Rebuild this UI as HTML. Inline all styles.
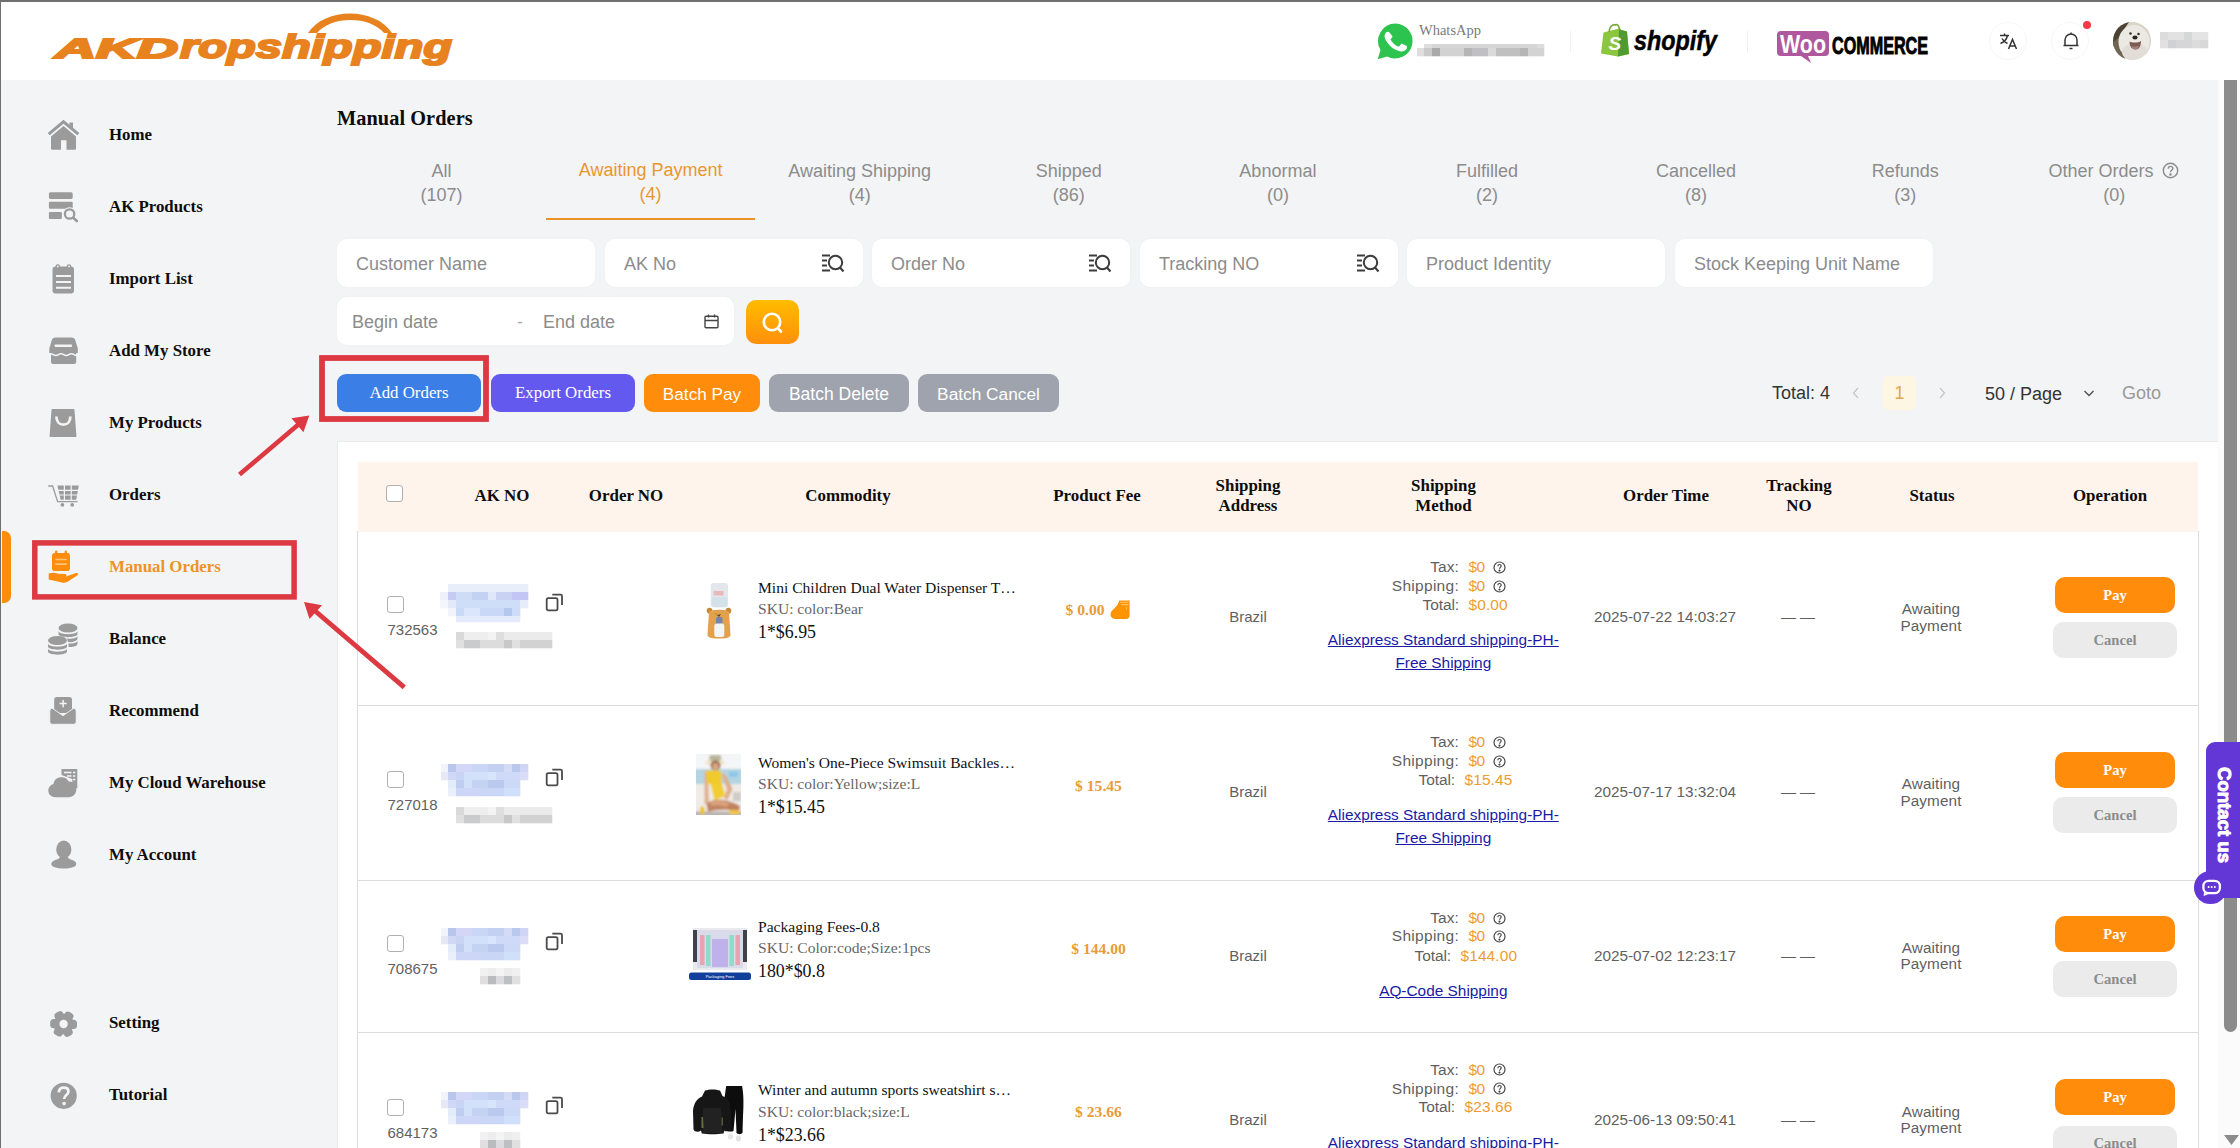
<!DOCTYPE html>
<html lang="en">
<head>
<meta charset="utf-8">
<title>Manual Orders - AKDropshipping</title>
<style>
html,body{margin:0;padding:0}
body{width:2240px;height:1148px;overflow:hidden;background:#f3f4f6;font-family:"Liberation Sans",sans-serif}
#page{position:relative;width:2240px;height:1148px;overflow:hidden;background:#f3f4f6}
.a{position:absolute;box-sizing:border-box}
.t{position:absolute;white-space:nowrap;margin:0}
svg{position:absolute;overflow:visible}
a{color:#1a1aa6;text-decoration:underline}

</style>
</head>
<body>
<div id="page">
<div class="a" style="left:0px;top:0px;width:2240px;height:80px;background:#fff"></div>
<div class="a" style="left:0px;top:0px;width:2240px;height:2px;background:#6f6f6f"></div>
<div class="a" style="left:2218px;top:80px;width:22px;height:1068px;background:#fbfbfb"></div>
<div class="a" style="left:2224px;top:80px;width:13px;height:952px;background:#8b8b8b;border-radius:0 0 7px 7px"></div>
<svg style="left:2223.500px;top:1135px" width="15" height="10" viewBox="0 0 15 10"><path d="M0 0h15L7.500 10z" fill="#8b8b8b"/></svg>
<div class="a" style="left:0px;top:0px;width:1.2px;height:1148px;background:#6f6f6f"></div>
<svg style="left:0;top:0" width="480" height="80" viewBox="0 0 480 80">
<path d="M308 33 C 325 7, 375 7, 392 33 L 384 33 C 370 15.500, 331 15.500, 317 33 Z" fill="#e8821e"/>
<g font-family="Liberation Sans, sans-serif" font-weight="bold" font-style="italic" fill="#e8821e" stroke="#e8821e" stroke-width="2" stroke-linejoin="miter">
<text x="55" y="57.500"><tspan font-size="28" textLength="123" lengthAdjust="spacingAndGlyphs">AKD</tspan><tspan x="180" font-size="34" textLength="272" lengthAdjust="spacingAndGlyphs">ropshipping</tspan></text>
</g>
</svg>
<svg style="left:1374.500px;top:20.500px" width="41" height="41" viewBox="0 0 40 40">
<path d="M20 2.5a17 17 0 0 0-14.6 25.7L2.6 37.2l9.3-2.6A17 17 0 1 0 20 2.5z" fill="#2dc34f"/>
<path d="M14.2 11.5c-.6-1.2-1.200-1.100-1.800-1.100-1.300 0-3.100 1.600-3.100 4.300 0 2.600 1.900 5.100 2.200 5.500.3.400 3.800 6 9.300 8.100 4.500 1.800 5.400 1.400 6.400 1.300 1-.1 3.100-1.300 3.600-2.500.4-1.200.4-2.300.3-2.500-.1-.2-.5-.4-1-.6l-3.600-1.700c-.5-.2-.9-.3-1.200.3-.4.500-1.400 1.700-1.700 2-.3.400-.6.400-1.100.1-.5-.2-2.200-.8-4.200-2.600-1.500-1.400-2.600-3.100-2.900-3.600-.3-.5 0-.8.200-1.100l.8-.9c.300-.3.300-.5.500-.9.200-.400.100-.700 0-.9z" fill="#fff"/>
</svg>
<div class="t " style="left:1419px;top:20.5px;font-size:14.5px;line-height:19px;color:#7a7a7a;font-family:'Liberation Serif',serif;">WhatsApp</div>
<svg style="left:1417px;top:44px" width="127" height="12" viewBox="0 0 127 12"><rect x="7" y="0" width="8.3" height="4.3" fill="#dedede"/><rect x="15" y="0" width="105.3" height="4.3" fill="#d6d6d6"/><rect x="120" y="0" width="7.3" height="4.3" fill="#dddddd"/><rect x="0" y="4" width="7.3" height="8.3" fill="#dfdddd"/><rect x="7" y="4" width="8.3" height="8.3" fill="#cacaca"/><rect x="15" y="4" width="8.3" height="8.3" fill="#a9a9a9"/><rect x="23" y="4" width="24.3" height="8.3" fill="#d2d2d2"/><rect x="47" y="4" width="8.3" height="8.3" fill="#b5b5b5"/><rect x="55" y="4" width="16.3" height="8.3" fill="#c0c0c4"/><rect x="71" y="4" width="8.3" height="8.3" fill="#dadada"/><rect x="79" y="4" width="24.3" height="8.3" fill="#c0c0c0"/><rect x="103" y="4" width="8.3" height="8.3" fill="#b5b5b5"/><rect x="111" y="4" width="16.3" height="8.3" fill="#d3d3d3"/></svg>
<div class="a" style="left:1570px;top:31px;width:1px;height:21px;background:#efefef"></div>
<svg style="left:1600px;top:22px" width="120" height="38" viewBox="0 0 120 38">
<path d="M3.5 10.500 L19 6.5 L21.5 8 L27 9.5 L29 32 L18 34.5 L1 31.500 Z" fill="#8cc63f"/>
<path d="M19 6.5 L21.5 8 L27 9.5 L29 32 L18 34.5 Z" fill="#4f9a32"/>
<path d="M9 10 C9 5 13 1.500 15.500 3 C18 1.500 19.500 5 19.500 8" fill="none" stroke="#7aa93c" stroke-width="1.600"/>
<text x="8.5" y="28" font-family="Liberation Sans, sans-serif" font-weight="bold" font-style="italic" font-size="19" fill="#fff">S</text>
<text x="34" y="28" font-family="Liberation Sans, sans-serif" font-weight="bold" font-style="italic" font-size="28.500" fill="#000" stroke="#000" stroke-width=".5" textLength="83" lengthAdjust="spacingAndGlyphs">shopify</text>
</svg>
<div class="a" style="left:1747px;top:31px;width:1px;height:21px;background:#efefef"></div>
<svg style="left:1776px;top:28px" width="156" height="38" viewBox="0 0 156 38">
<path d="M5 3h44a4 4 0 0 1 4 4v17a4 4 0 0 1-4 4H32l3 7-10-7H5a4 4 0 0 1-4-4V7a4 4 0 0 1 4-4z" fill="#b0589e"/>
<text x="4" y="25" font-family="Liberation Sans, sans-serif" font-weight="bold" font-size="25" fill="#fff" textLength="46" lengthAdjust="spacingAndGlyphs">Woo</text>
<text x="56" y="25.500" font-family="Liberation Sans, sans-serif" font-weight="bold" font-size="23" fill="#000" stroke="#000" stroke-width="0.9" textLength="96" lengthAdjust="spacingAndGlyphs">COMMERCE</text>
</svg>
<div class="a" style="left:1989px;top:22px;width:38px;height:38px;border-radius:50%;background:#fff;border:1px solid #f7f7f7"></div>
<svg style="left:1998px;top:31px" width="20" height="20" viewBox="0 0 20 20" fill="none" stroke="#333" stroke-width="1.500">
<path d="M2 4.500h9M6.500 2.500v2M9.500 4.500c-.8 3.500-3.500 6.500-7 8M4 7.500c1.200 2.300 3 4 5.500 5"/>
<path d="M10.500 18l4-9.500 4 9.500M11.800 15h5.400"/>
</svg>
<div class="a" style="left:2051px;top:22px;width:38px;height:38px;border-radius:50%;background:#fff;border:1px solid #f7f7f7"></div>
<svg style="left:2061px;top:31px" width="20" height="20" viewBox="0 0 20 20" fill="none" stroke="#333" stroke-width="1.500">
<path d="M4 14.500V9a6 6 0 0 1 12 0v5.500M2.500 14.500h15M8.500 17.500h3M10 1.500v1.500"/>
</svg>
<div class="a" style="left:2083px;top:21px;width:8px;height:8px;border-radius:50%;background:#f5384a"></div>
<svg style="left:2113px;top:22px" width="38" height="38" viewBox="0 0 38 38"><defs><clipPath id="av"><circle cx="19" cy="19" r="19"/></clipPath></defs>
<g clip-path="url(#av)"><rect width="38" height="38" fill="#d9d3c8"/><path d="M0 0h16l-8 12-8 14z" fill="#4b4234"/><path d="M0 20l8-6 4 24H0z" fill="#6f6553"/><path d="M30 0h8v14z" fill="#8a8476"/>
<ellipse cx="21" cy="20" rx="15.500" ry="17" fill="#ece9e3"/><ellipse cx="22" cy="30" rx="13" ry="9" fill="#e2ded7"/>
<circle cx="17.500" cy="11.500" r="1.300" fill="#3a332c"/><circle cx="25.500" cy="12" r="1.300" fill="#3a332c"/><ellipse cx="22" cy="15.500" rx="2.600" ry="1.900" fill="#2a2522"/>
<path d="M16.500 19.500c2 1.500 9 1.500 11.500-.5 0 5-2 8.500-5.500 8.500s-6-3-6-8z" fill="#7d5a56"/><path d="M18.500 24c1.500 1 6 1 7.500-.5-.5 2.500-2 4-3.800 4s-3.200-1.200-3.700-3.500z" fill="#a5807c"/></g></svg>
<svg style="left:2160px;top:32px" width="48" height="16" viewBox="0 0 48 16"><rect x="0" y="0" width="8.3" height="8.3" fill="#dcdcdc"/><rect x="8" y="0" width="16.3" height="8.3" fill="#e2e2e2"/><rect x="24" y="0" width="8.3" height="8.3" fill="#d6d8d8"/><rect x="32" y="0" width="16.3" height="8.3" fill="#e4e4e4"/><rect x="0" y="8" width="8.3" height="8.3" fill="#e2e0e0"/><rect x="8" y="8" width="8.3" height="8.3" fill="#cfd1d3"/><rect x="16" y="8" width="16.3" height="8.3" fill="#d6d6d8"/><rect x="32" y="8" width="8.3" height="8.3" fill="#dcdcdc"/><rect x="40" y="8" width="8.3" height="8.3" fill="#d8d8d8"/></svg>
<svg style="left:47px;top:119px" width="33" height="32" viewBox="0 0 33 32"><path d="M16.500 .8 L.7 14 L2.700 16.300 L16.500 4.800 L30.300 16.300 L32.300 14 L26 8.700 V3.500 H22.500 V5.800 Z" fill="#9b9b9b"/><path d="M16.500 7 L4 17.400 V29.800 a1 1 0 0 0 1 1 H14 V21.200 H19.500 V30.800 H28 a1 1 0 0 0 1-1 V17.400 Z" fill="#9b9b9b"/></svg>
<div class="t " style="left:109px;top:124px;font-size:16.85px;line-height:22px;color:#0d0d0d;font-family:'Liberation Serif',serif;font-weight:bold;">Home</div>
<svg style="left:48px;top:191px" width="32" height="32" viewBox="0 0 32 32"><rect x=".9" y="1.300" width="23.800" height="6.600" rx="1.600" fill="#9b9b9b"/><rect x=".9" y="10.800" width="23.800" height="7" rx="1" fill="#9b9b9b"/><rect x=".9" y="21" width="13" height="7" rx="1" fill="#9b9b9b"/><circle cx="21.600" cy="23" r="6.800" fill="#f3f4f6"/><circle cx="21.600" cy="23" r="4.700" fill="#f3f4f6" stroke="#9b9b9b" stroke-width="2.300"/><path d="M25.300 26.800 L28.800 30" stroke="#9b9b9b" stroke-width="2.600" stroke-linecap="round"/></svg>
<div class="t " style="left:109px;top:196px;font-size:16.85px;line-height:22px;color:#0d0d0d;font-family:'Liberation Serif',serif;font-weight:bold;">AK Products</div>
<svg style="left:51px;top:263px" width="26" height="32" viewBox="0 0 26 32"><rect x="1.500" y="3.500" width="21.500" height="27" rx="3" fill="#9b9b9b"/><circle cx="6.800" cy="3.600" r="2.300" fill="#9b9b9b"/><circle cx="18" cy="3.600" r="2.300" fill="#9b9b9b"/><circle cx="6.800" cy="3.400" r=".9" fill="#f3f4f6"/><circle cx="18" cy="3.400" r=".9" fill="#f3f4f6"/><path d="M5 13h15M5 19h15M5 24.800h15" stroke="#f3f4f6" stroke-width="2.100"/></svg>
<div class="t " style="left:109px;top:268px;font-size:16.85px;line-height:22px;color:#0d0d0d;font-family:'Liberation Serif',serif;font-weight:bold;">Import List</div>
<svg style="left:48px;top:336px" width="32" height="30" viewBox="0 0 32 30"><path d="M7.500 1.600h16a4 4 0 0 1 3.900 3l2.400 8v5.400H1.300v-5.400l2.400-8a4 4 0 0 1 3.800-3z" fill="#9b9b9b"/><rect x="3" y="17" width="25.200" height="11" rx="2" fill="#9b9b9b"/><path d="M0 18.600 q2.600-1.800 5.200 0 t5.200 0 t5.200 0 t5.200 0 t5.200 0 t5.200 0" fill="none" stroke="#f3f4f6" stroke-width="1.500"/><path d="M0 17h3v3h-3zM28.200 17h3v3h-3z" fill="#f3f4f6"/><rect x="6.400" y="8.600" width="17.800" height="2.300" rx="1.100" fill="#f3f4f6"/></svg>
<div class="t " style="left:109px;top:340px;font-size:16.85px;line-height:22px;color:#0d0d0d;font-family:'Liberation Serif',serif;font-weight:bold;">Add My Store</div>
<svg style="left:49px;top:407px" width="30" height="32" viewBox="0 0 30 32"><path d="M3.300 2.800h21.400l2 26.500H1.300z" fill="#9b9b9b" stroke="#9b9b9b" stroke-width="1.500" stroke-linejoin="round"/><path d="M7.400 9.500c0 5 2.800 8.200 7 8.200s7-3.200 7-8.200" fill="none" stroke="#f3f4f6" stroke-width="2.700"/></svg>
<div class="t " style="left:109px;top:412px;font-size:16.85px;line-height:22px;color:#0d0d0d;font-family:'Liberation Serif',serif;font-weight:bold;">My Products</div>
<svg style="left:47px;top:483px" width="34" height="28" viewBox="0 0 34 28"><path d="M1.300 3h4.300l5 15.700h20" fill="none" stroke="#9b9b9b" stroke-width="1.300"/><path d="M10.400 2.500h21.400l-2.600 14.300h-15.600z" fill="#9b9b9b"/><path d="M10 7.400h22M11 12h21M17.400 2v15M24.200 2v15" stroke="#f3f4f6" stroke-width="1.200"/><circle cx="15.400" cy="21.800" r="1.900" fill="#9b9b9b"/><circle cx="25.200" cy="21.800" r="1.900" fill="#9b9b9b"/></svg>
<div class="t " style="left:109px;top:484px;font-size:16.85px;line-height:22px;color:#0d0d0d;font-family:'Liberation Serif',serif;font-weight:bold;">Orders</div>
<svg style="left:48px;top:549px" width="32" height="36" viewBox="0 0 32 36"><rect x="4" y="4" width="18" height="18" rx="2.800" fill="#ff8c0a"/><rect x="7" y="1.500" width="2.400" height="5" rx="1.200" fill="#ff8c0a"/><rect x="16.600" y="1.500" width="2.400" height="5" rx="1.200" fill="#ff8c0a"/><path d="M7.300 10.500h11.400M7.300 15.200h11.400" stroke="#ffc27a" stroke-width="1.700"/><path d="M.7 24.500c3.500-1.200 6.500-1 9.500.2l7 .4c1.800.2 1.900 2.200.2 2.400l-4 .3 4.500-.3 10.300-3.400c1.800-.5 2.600 1.100 1.300 2.200l-9.500 6.200c-2 1.200-4 1.500-6 1.100l-13.300-3z" fill="#ff8c0a"/></svg>
<div class="t " style="left:109px;top:556px;font-size:16.85px;line-height:22px;color:#ee9226;font-family:'Liberation Serif',serif;font-weight:bold;">Manual Orders</div>
<svg style="left:47px;top:622px" width="32" height="34" viewBox="0 0 32 34"><g fill="#9b9b9b"><ellipse cx="21" cy="6" rx="9.500" ry="4.500"/><path d="M11.500 9.500c2 3.500 17 3.500 19 0v3c-2 3.500-17 3.500-19 0z"/><path d="M20 16.500c3.500.8 9.500 0 10.500-2.500v3c-1 2.500-5.500 3.500-9.500 3z"/><path d="M21.500 21.500c3.500.3 8-.500 9-2.500v3c-1 2.500-5 3.200-9 3z"/><ellipse cx="10.500" cy="18.500" rx="9.500" ry="4.500"/><path d="M1 22c2 3.500 17 3.500 19 0v3c-2 3.500-17 3.500-19 0z"/><path d="M1 27c2 3.500 17 3.500 19 0v3c-2 3.500-17 3.500-19 0z"/></g></svg>
<div class="t " style="left:109px;top:628px;font-size:16.85px;line-height:22px;color:#0d0d0d;font-family:'Liberation Serif',serif;font-weight:bold;">Balance</div>
<svg style="left:48px;top:695px" width="30" height="32" viewBox="0 0 30 32"><rect x="6.200" y="2" width="17.800" height="16" rx="2.800" fill="#9b9b9b"/><path d="M15.100 5v7.200M11.500 8.600h7.200" stroke="#f3f4f6" stroke-width="1.500"/><path d="M1.800 16.500c0-1.500.8-2.800 2.200-3.500l11 7.700 11-7.700c1.400.7 2.200 2 2.200 3.500v10.300a2.500 2.500 0 0 1-2.500 2.500h-21.400a2.500 2.500 0 0 1-2.500-2.500z" fill="#9b9b9b" stroke="#f3f4f6" stroke-width=".9"/></svg>
<div class="t " style="left:109px;top:700px;font-size:16.85px;line-height:22px;color:#0d0d0d;font-family:'Liberation Serif',serif;font-weight:bold;">Recommend</div>
<svg style="left:47px;top:767px" width="32" height="32" viewBox="0 0 32 32"><path d="M14.500 2h15.800v19h-5v-9l-10.800-4z" fill="#9b9b9b"/><path d="M17 5.500h7.500M26 5.500h2.300M20 9h4.500M26 9h2.300M26 12.500h2.300" stroke="#f3f4f6" stroke-width="1.500"/><path d="M8 30.300a6.800 6.800 0 0 1-1.600-13.400A8.300 8.300 0 0 1 21.800 14.500a6.600 6.600 0 0 1 7.600 7c0 4.800-2.800 8.800-7.800 8.800z" fill="#9b9b9b"/></svg>
<div class="t " style="left:109px;top:772px;font-size:16.85px;line-height:22px;color:#0d0d0d;font-family:'Liberation Serif',serif;font-weight:bold;">My Cloud Warehouse</div>
<svg style="left:50px;top:839px" width="28" height="32" viewBox="0 0 28 32"><ellipse cx="13.800" cy="10.500" rx="7.600" ry="9" fill="#9b9b9b"/><path d="M9.800 17.500c.3 2-3 3-5.500 4-2 .8-3 2-3 3.500 0 2.800 5.300 4.500 12.500 4.500s12.500-1.700 12.500-4.500c0-1.500-1-2.700-3-3.500-2.500-1-5.800-2-5.500-4z" fill="#9b9b9b"/></svg>
<div class="t " style="left:109px;top:844px;font-size:16.85px;line-height:22px;color:#0d0d0d;font-family:'Liberation Serif',serif;font-weight:bold;">My Account</div>
<svg style="left:49px;top:1009px" width="30" height="30" viewBox="0 0 30 30"><g transform="translate(14.600 15)" fill="#9b9b9b"><circle r="10.200"/><rect x="-4.300" y="-13.400" width="9.400" height="9" rx="3.600" transform="rotate(30)"/><rect x="-4.300" y="-13.400" width="9.400" height="9" rx="3.600" transform="rotate(90)"/><rect x="-4.300" y="-13.400" width="9.400" height="9" rx="3.600" transform="rotate(150)"/><rect x="-4.300" y="-13.400" width="9.400" height="9" rx="3.600" transform="rotate(210)"/><rect x="-4.300" y="-13.400" width="9.400" height="9" rx="3.600" transform="rotate(270)"/><rect x="-4.300" y="-13.400" width="9.400" height="9" rx="3.600" transform="rotate(330)"/><circle r="4.200" fill="#f3f4f6"/></g></svg>
<div class="t " style="left:109px;top:1012px;font-size:16.85px;line-height:22px;color:#0d0d0d;font-family:'Liberation Serif',serif;font-weight:bold;">Setting</div>
<svg style="left:49px;top:1081px" width="30" height="30" viewBox="0 0 30 30"><circle cx="14.700" cy="14.800" r="13.100" fill="#9b9b9b"/><path d="M9.800 11.300c.2-3 2.200-4.700 5-4.700 2.900 0 4.700 1.700 4.700 4 0 3.200-4.400 3.600-4.400 7.300" fill="none" stroke="#f3f4f6" stroke-width="2.700"/><circle cx="15.100" cy="22.600" r="1.800" fill="#f3f4f6"/></svg>
<div class="t " style="left:109px;top:1084px;font-size:16.85px;line-height:22px;color:#0d0d0d;font-family:'Liberation Serif',serif;font-weight:bold;">Tutorial</div>
<div class="a" style="left:2px;top:531px;width:9px;height:72px;background:#ff8c0a;border-radius:0 7px 7px 0"></div>
<div class="t " style="left:337px;top:105px;font-size:20.3px;line-height:26px;color:#0d0d0d;font-family:'Liberation Serif',serif;font-weight:bold;letter-spacing:.08px;">Manual Orders</div>
<div class="t " style="left:441.5px;transform:translateX(-50%);top:159.5px;font-size:18px;line-height:23px;color:#8c8c8c;">All</div>
<div class="t " style="left:441.5px;transform:translateX(-50%);top:183.5px;font-size:18px;line-height:23px;color:#8c8c8c;">(107)</div>
<div class="t " style="left:650.6px;transform:translateX(-50%);top:158.5px;font-size:18px;line-height:23px;color:#ea972e;">Awaiting Payment</div>
<div class="t " style="left:650.6px;transform:translateX(-50%);top:182.5px;font-size:18px;line-height:23px;color:#ea972e;">(4)</div>
<div class="t " style="left:859.7px;transform:translateX(-50%);top:159.5px;font-size:18px;line-height:23px;color:#8c8c8c;">Awaiting Shipping</div>
<div class="t " style="left:859.7px;transform:translateX(-50%);top:183.5px;font-size:18px;line-height:23px;color:#8c8c8c;">(4)</div>
<div class="t " style="left:1068.8px;transform:translateX(-50%);top:159.5px;font-size:18px;line-height:23px;color:#8c8c8c;">Shipped</div>
<div class="t " style="left:1068.8px;transform:translateX(-50%);top:183.5px;font-size:18px;line-height:23px;color:#8c8c8c;">(86)</div>
<div class="t " style="left:1277.9px;transform:translateX(-50%);top:159.5px;font-size:18px;line-height:23px;color:#8c8c8c;">Abnormal</div>
<div class="t " style="left:1277.9px;transform:translateX(-50%);top:183.5px;font-size:18px;line-height:23px;color:#8c8c8c;">(0)</div>
<div class="t " style="left:1487.0px;transform:translateX(-50%);top:159.5px;font-size:18px;line-height:23px;color:#8c8c8c;">Fulfilled</div>
<div class="t " style="left:1487.0px;transform:translateX(-50%);top:183.5px;font-size:18px;line-height:23px;color:#8c8c8c;">(2)</div>
<div class="t " style="left:1696.1px;transform:translateX(-50%);top:159.5px;font-size:18px;line-height:23px;color:#8c8c8c;">Cancelled</div>
<div class="t " style="left:1696.1px;transform:translateX(-50%);top:183.5px;font-size:18px;line-height:23px;color:#8c8c8c;">(8)</div>
<div class="t " style="left:1905.2px;transform:translateX(-50%);top:159.5px;font-size:18px;line-height:23px;color:#8c8c8c;">Refunds</div>
<div class="t " style="left:1905.2px;transform:translateX(-50%);top:183.5px;font-size:18px;line-height:23px;color:#8c8c8c;">(3)</div>
<div class="t " style="left:2101px;transform:translateX(-50%);top:159.5px;font-size:18px;line-height:23px;color:#8c8c8c;">Other Orders</div>
<svg style="left:2162px;top:162px" width="17" height="17" viewBox="0 0 17 17" fill="none" stroke="#8c8c8c" stroke-width="1.400"><circle cx="8.500" cy="8.500" r="7.200"/><path d="M6.200 6.800c0-1.500 1-2.400 2.300-2.400 1.400 0 2.300.9 2.300 2.100 0 1.700-2.300 1.800-2.300 3.700"/><circle cx="8.500" cy="12.500" r=".6" fill="#8c8c8c"/></svg>
<div class="t " style="left:2114.3px;transform:translateX(-50%);top:183.5px;font-size:18px;line-height:23px;color:#8c8c8c;">(0)</div>
<div class="a" style="left:546px;top:217.6px;width:209px;height:2px;background:#ea9228"></div>
<div class="a" style="left:337px;top:239px;width:258px;height:48px;background:#fff;border-radius:10px;box-shadow:0 0 3px rgba(0,0,0,.03)"></div>
<div class="t " style="left:356px;top:252.5px;font-size:18px;line-height:23px;color:#8c8c8c;">Customer Name</div>
<div class="a" style="left:605px;top:239px;width:258px;height:48px;background:#fff;border-radius:10px;box-shadow:0 0 3px rgba(0,0,0,.03)"></div>
<div class="t " style="left:624px;top:252.5px;font-size:18px;line-height:23px;color:#8c8c8c;">AK No</div>
<svg style="left:821px;top:253px" width="24" height="22" viewBox="0 0 24 22" fill="none" stroke="#3c3c3c" stroke-width="2"><path d="M1 2.500h8M1 7.500h5M1 12.500h5M1 17.500h8"/><circle cx="14.500" cy="9.500" r="6.700"/><path d="M19 14.500l3.500 4"/></svg>
<div class="a" style="left:872px;top:239px;width:258px;height:48px;background:#fff;border-radius:10px;box-shadow:0 0 3px rgba(0,0,0,.03)"></div>
<div class="t " style="left:891px;top:252.5px;font-size:18px;line-height:23px;color:#8c8c8c;">Order No</div>
<svg style="left:1088px;top:253px" width="24" height="22" viewBox="0 0 24 22" fill="none" stroke="#3c3c3c" stroke-width="2"><path d="M1 2.500h8M1 7.500h5M1 12.500h5M1 17.500h8"/><circle cx="14.500" cy="9.500" r="6.700"/><path d="M19 14.500l3.500 4"/></svg>
<div class="a" style="left:1140px;top:239px;width:258px;height:48px;background:#fff;border-radius:10px;box-shadow:0 0 3px rgba(0,0,0,.03)"></div>
<div class="t " style="left:1159px;top:252.5px;font-size:18px;line-height:23px;color:#8c8c8c;">Tracking NO</div>
<svg style="left:1356px;top:253px" width="24" height="22" viewBox="0 0 24 22" fill="none" stroke="#3c3c3c" stroke-width="2"><path d="M1 2.500h8M1 7.500h5M1 12.500h5M1 17.500h8"/><circle cx="14.500" cy="9.500" r="6.700"/><path d="M19 14.500l3.500 4"/></svg>
<div class="a" style="left:1407px;top:239px;width:258px;height:48px;background:#fff;border-radius:10px;box-shadow:0 0 3px rgba(0,0,0,.03)"></div>
<div class="t " style="left:1426px;top:252.5px;font-size:18px;line-height:23px;color:#8c8c8c;">Product Identity</div>
<div class="a" style="left:1675px;top:239px;width:258px;height:48px;background:#fff;border-radius:10px;box-shadow:0 0 3px rgba(0,0,0,.03)"></div>
<div class="t " style="left:1694px;top:252.5px;font-size:18px;line-height:23px;color:#8c8c8c;">Stock Keeping Unit Name</div>
<div class="a" style="left:337px;top:297px;width:397px;height:48px;background:#fff;border-radius:10px;box-shadow:0 0 3px rgba(0,0,0,.03)"></div>
<div class="t " style="left:352px;top:310.5px;font-size:18px;line-height:23px;color:#8c8c8c;">Begin date</div>
<div class="t " style="left:517px;top:310.5px;font-size:18px;line-height:23px;color:#aaa;">-</div>
<div class="t " style="left:543px;top:310.5px;font-size:18px;line-height:23px;color:#8c8c8c;">End date</div>
<svg style="left:704px;top:314px" width="15" height="15" viewBox="0 0 15 15" fill="none" stroke="#444" stroke-width="1.400"><rect x="1" y="2.200" width="13" height="11.500" rx="1"/><path d="M1 6.500h13M4.500 .5v3M10.500 .5v3"/></svg>
<div class="a" style="left:746px;top:300px;width:53px;height:44px;border-radius:10px;background:linear-gradient(180deg,#ffbc00,#ff8f0a)"></div>
<svg style="left:760px;top:310px" width="26" height="26" viewBox="0 0 26 26" fill="none" stroke="#fff" stroke-width="2.600"><circle cx="12" cy="12" r="8.200"/><path d="M18 18.500l3 3" stroke-linecap="round"/></svg>
<div class="a" style="left:337px;top:374px;width:144px;height:38px;background:#3b7fe6;border-radius:9px"></div>
<div class="t " style="left:409.0px;transform:translateX(-50%);top:382px;font-size:16.85px;line-height:22px;color:#fff;font-family:'Liberation Serif',serif;">Add Orders</div>
<div class="a" style="left:491px;top:374px;width:144px;height:38px;background:#6359ee;border-radius:9px"></div>
<div class="t " style="left:563.0px;transform:translateX(-50%);top:382px;font-size:16.85px;line-height:22px;color:#fff;font-family:'Liberation Serif',serif;">Export Orders</div>
<div class="a" style="left:644px;top:374px;width:116px;height:38px;background:#ff8c0a;border-radius:9px"></div>
<div class="t " style="left:702.0px;transform:translateX(-50%);top:383px;font-size:17.2px;line-height:22px;color:#fff;">Batch Pay</div>
<div class="a" style="left:769px;top:374px;width:140px;height:38px;background:#9ea3ad;border-radius:9px"></div>
<div class="t " style="left:839.0px;transform:translateX(-50%);top:382.5px;font-size:17.5px;line-height:23px;color:#fff;">Batch Delete</div>
<div class="a" style="left:918px;top:374px;width:141px;height:38px;background:#9ea3ad;border-radius:9px"></div>
<div class="t " style="left:988.5px;transform:translateX(-50%);top:383px;font-size:17.3px;line-height:22px;color:#fff;">Batch Cancel</div>
<div class="t " style="left:1772px;top:381.5px;font-size:18px;line-height:23px;color:#333;">Total: 4</div>
<svg style="left:1851px;top:387px" width="10" height="12" viewBox="0 0 10 12" fill="none" stroke="#c8c8c8" stroke-width="1.400"><path d="M7 1L2.500 6 7 11"/></svg>
<div class="a" style="left:1883px;top:376px;width:33px;height:34px;background:#fdf6e3;border-radius:5px"></div>
<div class="t " style="left:1899.5px;transform:translateX(-50%);top:381.5px;font-size:18px;line-height:23px;color:#dca94a;">1</div>
<svg style="left:1937px;top:387px" width="10" height="12" viewBox="0 0 10 12" fill="none" stroke="#c8c8c8" stroke-width="1.400"><path d="M3 1l4.500 5L3 11"/></svg>
<div class="t " style="left:1985px;top:382.5px;font-size:18px;line-height:23px;color:#333;">50 / Page</div>
<svg style="left:2083px;top:389px" width="12" height="9" viewBox="0 0 12 9" fill="none" stroke="#555" stroke-width="1.500"><path d="M1.500 2l4.500 4.500L10.500 2"/></svg>
<div class="t " style="left:2122px;top:381.5px;font-size:18px;line-height:23px;color:#999;">Goto</div>
<div class="a" style="left:337px;top:441px;width:1881px;height:720px;background:#fff;border-top:1px solid #e8eaeb;border-left:1px solid #e8eaeb"></div>
<div class="a" style="left:358px;top:462px;width:1840px;height:69.5px;background:#fef4eb"></div>
<div class="a" style="left:357px;top:531px;width:1842px;height:640px;border-left:1px solid #dcdcdc;border-right:1px solid #dcdcdc"></div>
<div class="a" style="left:386px;top:485px;width:17px;height:17px;background:#fff;border:1px solid #b0b0b0;border-radius:3px"></div>
<div class="t " style="left:502px;transform:translateX(-50%);top:485px;font-size:16.9px;line-height:22px;color:#0d0d0d;font-family:'Liberation Serif',serif;font-weight:bold;">AK NO</div>
<div class="t " style="left:626px;transform:translateX(-50%);top:485px;font-size:16.9px;line-height:22px;color:#0d0d0d;font-family:'Liberation Serif',serif;font-weight:bold;">Order NO</div>
<div class="t " style="left:848px;transform:translateX(-50%);top:485px;font-size:16.9px;line-height:22px;color:#0d0d0d;font-family:'Liberation Serif',serif;font-weight:bold;">Commodity</div>
<div class="t " style="left:1097px;transform:translateX(-50%);top:485px;font-size:16.9px;line-height:22px;color:#0d0d0d;font-family:'Liberation Serif',serif;font-weight:bold;">Product Fee</div>
<div class="t " style="left:1248px;transform:translateX(-50%);top:475px;font-size:16.9px;line-height:22px;color:#0d0d0d;font-family:'Liberation Serif',serif;font-weight:bold;">Shipping</div>
<div class="t " style="left:1248px;transform:translateX(-50%);top:495px;font-size:16.9px;line-height:22px;color:#0d0d0d;font-family:'Liberation Serif',serif;font-weight:bold;">Address</div>
<div class="t " style="left:1443.5px;transform:translateX(-50%);top:475px;font-size:16.9px;line-height:22px;color:#0d0d0d;font-family:'Liberation Serif',serif;font-weight:bold;">Shipping</div>
<div class="t " style="left:1443.5px;transform:translateX(-50%);top:495px;font-size:16.9px;line-height:22px;color:#0d0d0d;font-family:'Liberation Serif',serif;font-weight:bold;">Method</div>
<div class="t " style="left:1666px;transform:translateX(-50%);top:485px;font-size:16.9px;line-height:22px;color:#0d0d0d;font-family:'Liberation Serif',serif;font-weight:bold;">Order Time</div>
<div class="t " style="left:1799px;transform:translateX(-50%);top:475px;font-size:16.9px;line-height:22px;color:#0d0d0d;font-family:'Liberation Serif',serif;font-weight:bold;">Tracking</div>
<div class="t " style="left:1799px;transform:translateX(-50%);top:495px;font-size:16.9px;line-height:22px;color:#0d0d0d;font-family:'Liberation Serif',serif;font-weight:bold;">NO</div>
<div class="t " style="left:1932px;transform:translateX(-50%);top:485px;font-size:16.9px;line-height:22px;color:#0d0d0d;font-family:'Liberation Serif',serif;font-weight:bold;">Status</div>
<div class="t " style="left:2110px;transform:translateX(-50%);top:485px;font-size:16.9px;line-height:22px;color:#0d0d0d;font-family:'Liberation Serif',serif;font-weight:bold;">Operation</div>
<svg style="left:0;top:0" width="0" height="0"><defs><filter id="bl" x="-10%" y="-10%" width="120%" height="120%"><feGaussianBlur stdDeviation="0.55"/></filter><filter id="bl2" x="-10%" y="-10%" width="120%" height="120%"><feGaussianBlur stdDeviation="0.9"/></filter></defs></svg>
<div class="a" style="left:387px;top:596px;width:17px;height:17px;background:#fff;border:1px solid #b0b0b0;border-radius:3px"></div>
<div class="t " style="left:387.5px;top:620px;font-size:15px;line-height:20px;color:#5f5f5f;">732563</div>
<svg style="left:440px;top:584px" width="88" height="38" viewBox="0 0 88 38"><rect x="8" y="0" width="80.3" height="8.3" fill="#e8eefa"/><rect x="0" y="8" width="8.3" height="8.3" fill="#eef1f9"/><rect x="8" y="8" width="8.3" height="8.3" fill="#c5cbf3"/><rect x="16" y="8" width="16.3" height="8.3" fill="#cfdcf5"/><rect x="32" y="8" width="16.3" height="8.3" fill="#c3d2f2"/><rect x="48" y="8" width="8.3" height="8.3" fill="#dfe8fa"/><rect x="56" y="8" width="16.3" height="8.3" fill="#c9d2f3"/><rect x="72" y="8" width="16.3" height="8.3" fill="#c3c6f5"/><rect x="0" y="16" width="8.3" height="8.3" fill="#f4f6fc"/><rect x="8" y="16" width="8.3" height="8.3" fill="#e3e9f8"/><rect x="16" y="16" width="64.3" height="8.3" fill="#cfdef8"/><rect x="80" y="16" width="8.3" height="8.3" fill="#e6ecf9"/><rect x="8" y="24" width="8.3" height="8.3" fill="#f1f4fb"/><rect x="16" y="24" width="8.3" height="8.3" fill="#c9daf6"/><rect x="24" y="24" width="16.3" height="8.3" fill="#dbe5fb"/><rect x="40" y="24" width="24.3" height="8.3" fill="#c9d8f7"/><rect x="64" y="24" width="8.3" height="8.3" fill="#b3c8ec"/><rect x="72" y="24" width="8.3" height="8.3" fill="#cddcf8"/><rect x="16" y="32" width="64.3" height="6.3" fill="#e3eafa"/></svg>
<svg style="left:456px;top:632px" width="96" height="16" viewBox="0 0 96 16"><rect x="0" y="0" width="8.3" height="8.3" fill="#d9d9d9"/><rect x="8" y="0" width="24.3" height="8.3" fill="#eeeeee"/><rect x="32" y="0" width="8.3" height="8.3" fill="#f3f3f3"/><rect x="40" y="0" width="8.3" height="8.3" fill="#dedede"/><rect x="48" y="0" width="48.3" height="8.3" fill="#ebebeb"/><rect x="0" y="8" width="8.3" height="8.3" fill="#e0e0e0"/><rect x="8" y="8" width="16.3" height="8.3" fill="#c9cbcd"/><rect x="24" y="8" width="24.3" height="8.3" fill="#dcdcdc"/><rect x="48" y="8" width="8.3" height="8.3" fill="#c8c8c8"/><rect x="56" y="8" width="8.3" height="8.3" fill="#e0e0e0"/><rect x="64" y="8" width="32.3" height="8.3" fill="#d2d2d2"/></svg>
<svg style="left:545px;top:593px" width="18" height="19" viewBox="0 0 18 19" fill="none" stroke="#4a4a4a" stroke-width="1.800"><rect x="1.700" y="5.200" width="10.800" height="12.200" rx="1.600"/><path d="M7.300 1.700h8.200a1.500 1.500 0 0 1 1.500 1.500V12"/></svg>
<svg style="left:702px;top:581px" width="34" height="60" viewBox="0 0 34 60"><g filter="url(#bl)"><rect x="8.700" y="2" width="17.400" height="24.500" rx="3" fill="#e3e7ec"/><rect x="9.500" y="16" width="15.800" height="10" rx="3" fill="#d3e1e9"/><rect x="11.500" y="10" width="10" height="4.500" fill="#e7b9bb"/><circle cx="7.600" cy="29.700" r="2.900" fill="#c98a35"/><circle cx="26.400" cy="29.700" r="2.900" fill="#c98a35"/><path d="M7 31 C10 28,24 28,27 31 L28.500 54 C28.500 57,22 57.500,17 57.500 C12 57.500,5.500 57,5.500 54 Z" fill="#e2a14e"/><path d="M12.500 31.500 l3 2.500 l3.500-1 l-2 3 z" fill="#5a4a2a"/><rect x="14" y="36" width="6.500" height="7" rx="1.500" fill="#7684ab"/><rect x="12.300" y="42.500" width="10" height="13.500" rx="2.500" fill="#f4f4f6"/></g></svg>
<div class="t " style="left:758px;top:578px;font-size:15.57px;line-height:20px;color:#111;font-family:'Liberation Serif',serif;">Mini Children Dual Water Dispenser T…</div>
<div class="t " style="left:758px;top:599px;font-size:15.57px;line-height:20px;color:#666;font-family:'Liberation Serif',serif;">SKU: color:Bear</div>
<div class="t " style="left:758px;top:620.5px;font-size:17.85px;line-height:23px;color:#111;font-family:'Liberation Serif',serif;">1*$6.95</div>
<div class="t " style="left:1085px;transform:translateX(-50%);top:600px;font-size:15.6px;line-height:20px;color:#e89c38;font-family:'Liberation Serif',serif;font-weight:bold;">$ 0.00</div>
<svg style="left:1109px;top:599px" width="22" height="21" viewBox="0 0 22 21"><path d="M10.200 1.500 H20.600 V16 C20.600 18.500 19.500 20 17 20 H7.500 C3.500 20 1 18 1.600 14.500 C2.300 10.500 8.500 9 10.200 1.500 Z" fill="#ff9400"/><path d="M11 3.300h8.600M12.500 5.600h7M17.500 8v2.500" stroke="#ffc46a" stroke-width="1.100" fill="none"/></svg>
<div class="t " style="left:1248px;transform:translateX(-50%);top:607px;font-size:15px;line-height:20px;color:#5f5f5f;">Brazil</div>
<div class="t " style="left:1459px;transform:translateX(-100%);top:556.8px;font-size:15.5px;line-height:20px;color:#5f5f5f;letter-spacing:.1px;">Tax:</div>
<div class="t " style="left:1468.5px;top:556.8px;font-size:15.5px;line-height:20px;color:#ee9c30;letter-spacing:-.5px;">$0</div>
<svg style="left:1492.5px;top:560.5px" width="13" height="13" viewBox="0 0 13 13" fill="none" stroke="#444" stroke-width="1.200"><circle cx="6.500" cy="6.500" r="5.500"/><path d="M4.800 5.300c0-1.100.8-1.800 1.700-1.800 1 0 1.700.7 1.700 1.600 0 1.200-1.700 1.400-1.700 2.700"/><circle cx="6.500" cy="9.600" r=".5" fill="#444"/></svg>
<div class="t " style="left:1459px;transform:translateX(-100%);top:575.8px;font-size:15.5px;line-height:20px;color:#5f5f5f;letter-spacing:.28px;">Shipping:</div>
<div class="t " style="left:1468.5px;top:575.8px;font-size:15.5px;line-height:20px;color:#ee9c30;letter-spacing:-.5px;">$0</div>
<svg style="left:1492.5px;top:579.5px" width="13" height="13" viewBox="0 0 13 13" fill="none" stroke="#444" stroke-width="1.200"><circle cx="6.500" cy="6.500" r="5.500"/><path d="M4.800 5.300c0-1.100.8-1.800 1.700-1.800 1 0 1.700.7 1.700 1.600 0 1.200-1.700 1.400-1.700 2.700"/><circle cx="6.500" cy="9.600" r=".5" fill="#444"/></svg>
<div class="t " style="left:1459px;transform:translateX(-100%);top:594.5px;font-size:15.5px;line-height:20px;color:#5f5f5f;letter-spacing:-.1px;">Total:</div>
<div class="t " style="left:1468.5px;top:594.5px;font-size:15.5px;line-height:20px;color:#ee9c30;letter-spacing:.08px;">$0.00</div>
<div class="t " style="left:1443.3px;transform:translateX(-50%);top:629.6px;font-size:15.4px;line-height:20px;color:#1a1aa6;"><a>Aliexpress Standard shipping-PH-</a></div>
<div class="t " style="left:1443.3px;transform:translateX(-50%);top:652.6px;font-size:15.4px;line-height:20px;color:#1a1aa6;"><a>Free Shipping</a></div>
<div class="t " style="left:1665px;transform:translateX(-50%);top:607px;font-size:15.3px;line-height:20px;color:#5f5f5f;">2025-07-22 14:03:27</div>
<div class="t " style="left:1798px;transform:translateX(-50%);top:607px;font-size:15px;line-height:20px;color:#5f5f5f;">— —</div>
<div class="t " style="left:1931px;transform:translateX(-50%);top:598.5px;font-size:15.3px;line-height:20px;color:#5f5f5f;letter-spacing:.1px;">Awaiting</div>
<div class="t " style="left:1931px;transform:translateX(-50%);top:615.5px;font-size:15.3px;line-height:20px;color:#5f5f5f;letter-spacing:.1px;">Payment</div>
<div class="a" style="left:2055px;top:577px;width:120px;height:36px;background:#ff8c0a;border-radius:10px"></div>
<div class="t " style="left:2115px;transform:translateX(-50%);top:585.5px;font-size:14.6px;line-height:19px;color:#fff;font-family:'Liberation Serif',serif;font-weight:bold;">Pay</div>
<div class="a" style="left:2053px;top:622px;width:124px;height:36px;background:#ebebeb;border-radius:10px"></div>
<div class="t " style="left:2115px;transform:translateX(-50%);top:630.5px;font-size:14.6px;line-height:19px;color:#8c8c8c;font-family:'Liberation Serif',serif;font-weight:bold;">Cancel</div>
<div class="a" style="left:358px;top:705px;width:1840px;height:1px;background:#dcdcdc"></div>
<div class="a" style="left:387px;top:771px;width:17px;height:17px;background:#fff;border:1px solid #b0b0b0;border-radius:3px"></div>
<div class="t " style="left:387.5px;top:795px;font-size:15px;line-height:20px;color:#5f5f5f;">727018</div>
<svg style="left:441px;top:764px" width="87" height="32" viewBox="0 0 87 32"><rect x="0" y="0" width="7.3" height="8.3" fill="#f3f4fa"/><rect x="7" y="0" width="8.3" height="8.3" fill="#b9c6ec"/><rect x="15" y="0" width="16.3" height="8.3" fill="#d3d6f6"/><rect x="31" y="0" width="16.3" height="8.3" fill="#c9d6f5"/><rect x="47" y="0" width="16.3" height="8.3" fill="#c3d0f2"/><rect x="63" y="0" width="8.3" height="8.3" fill="#d3dbf7"/><rect x="71" y="0" width="8.3" height="8.3" fill="#b9c9ee"/><rect x="79" y="0" width="8.3" height="8.3" fill="#d0d5f5"/><rect x="0" y="8" width="7.3" height="8.3" fill="#e6e8f5"/><rect x="7" y="8" width="8.3" height="8.3" fill="#d0d8f5"/><rect x="15" y="8" width="8.3" height="8.3" fill="#c9d3f3"/><rect x="23" y="8" width="24.3" height="8.3" fill="#d3e0fa"/><rect x="47" y="8" width="8.3" height="8.3" fill="#d9e5fc"/><rect x="55" y="8" width="24.3" height="8.3" fill="#cfdaf8"/><rect x="79" y="8" width="8.3" height="8.3" fill="#dadcf8"/><rect x="7" y="16" width="8.3" height="8.3" fill="#e3ecf9"/><rect x="15" y="16" width="8.3" height="8.3" fill="#bfcdf0"/><rect x="23" y="16" width="8.3" height="8.3" fill="#d3e0fa"/><rect x="31" y="16" width="16.3" height="8.3" fill="#c5d3f3"/><rect x="47" y="16" width="16.3" height="8.3" fill="#bcc9ee"/><rect x="63" y="16" width="16.3" height="8.3" fill="#ccdaf7"/><rect x="7" y="24" width="8.3" height="8.3" fill="#eaf0f9"/><rect x="15" y="24" width="24.3" height="8.3" fill="#cdd6f6"/><rect x="39" y="24" width="24.3" height="8.3" fill="#c9d6f5"/><rect x="63" y="24" width="16.3" height="8.3" fill="#d0dffa"/></svg>
<svg style="left:456px;top:807px" width="96" height="16" viewBox="0 0 96 16"><rect x="0" y="0" width="8.3" height="8.3" fill="#d9d9d9"/><rect x="8" y="0" width="24.3" height="8.3" fill="#eeeeee"/><rect x="32" y="0" width="8.3" height="8.3" fill="#f3f3f3"/><rect x="40" y="0" width="8.3" height="8.3" fill="#dedede"/><rect x="48" y="0" width="48.3" height="8.3" fill="#ebebeb"/><rect x="0" y="8" width="8.3" height="8.3" fill="#e0e0e0"/><rect x="8" y="8" width="16.3" height="8.3" fill="#c9cbcd"/><rect x="24" y="8" width="24.3" height="8.3" fill="#dcdcdc"/><rect x="48" y="8" width="8.3" height="8.3" fill="#c8c8c8"/><rect x="56" y="8" width="8.3" height="8.3" fill="#e0e0e0"/><rect x="64" y="8" width="32.3" height="8.3" fill="#d2d2d2"/></svg>
<svg style="left:545px;top:768px" width="18" height="19" viewBox="0 0 18 19" fill="none" stroke="#4a4a4a" stroke-width="1.800"><rect x="1.700" y="5.200" width="10.800" height="12.200" rx="1.600"/><path d="M7.300 1.700h8.200a1.500 1.500 0 0 1 1.500 1.500V12"/></svg>
<svg style="left:696px;top:754px" width="45" height="61" viewBox="0 0 45 61"><defs><clipPath id="swc"><rect width="45" height="61"/></clipPath></defs><g clip-path="url(#swc)"><g filter="url(#bl2)"><rect x="-2" y="-2" width="49" height="18" fill="#f4f5f6"/><rect x="-2" y="15" width="49" height="15.500" fill="#b3d5e1"/><rect x="33" y="17.500" width="9" height="5.500" fill="#8fc6ea"/><rect x="-2" y="30" width="49" height="33" fill="#efebe7"/><rect x="37" y="38" width="8" height="9" fill="#cfcbc7"/><rect x="-2" y="57.500" width="49" height="5" fill="#b9b4b2"/><ellipse cx="19" cy="8.500" rx="10" ry="3" fill="#efe5c6"/><rect x="13.200" y="1" width="12" height="6" rx="2" fill="#b9b59b"/><ellipse cx="19.500" cy="11.500" rx="5" ry="5" fill="#9a6a48"/><ellipse cx="19.500" cy="12.500" rx="3" ry="3.500" fill="#dba883"/><path d="M8.500 17 l3.500 0 l1 33 l-4.500 0z" fill="#e0b090"/><path d="M25 19 l5 2 l6.500 14 l-5 11 l-3.500-2 l3-9z" fill="#deae8c"/><path d="M10 16.500 h15 l1 13.500 h-15z" fill="#f0c92a"/><path d="M14.500 30 h11.500 l3.500 12 l-11 4.500z" fill="#f1cd33"/><path d="M10.500 50 C 16 44, 30 44, 44 52 L 43 57.500 C 32 55, 20 55, 12 58 Z" fill="#c08360"/><path d="M14 48 C 20 45, 28 46, 34 50 L 30 53 C 24 51, 18 51, 15 52 Z" fill="#d9a07c"/><rect x="4" y="52.500" width="4.500" height="8" rx="1.500" fill="#f0c222"/><rect x="33" y="56" width="11" height="4.500" rx="1.500" fill="#f0c445"/></g></g></svg>
<div class="t " style="left:758px;top:753px;font-size:15.57px;line-height:20px;color:#111;font-family:'Liberation Serif',serif;">Women's One-Piece Swimsuit Backles…</div>
<div class="t " style="left:758px;top:774px;font-size:15.57px;line-height:20px;color:#666;font-family:'Liberation Serif',serif;">SKU: color:Yellow;size:L</div>
<div class="t " style="left:758px;top:795.5px;font-size:17.85px;line-height:23px;color:#111;font-family:'Liberation Serif',serif;">1*$15.45</div>
<div class="t " style="left:1098.5px;transform:translateX(-50%);top:775.5px;font-size:15.6px;line-height:20px;color:#e89c38;font-family:'Liberation Serif',serif;font-weight:bold;">$ 15.45</div>
<div class="t " style="left:1248px;transform:translateX(-50%);top:782px;font-size:15px;line-height:20px;color:#5f5f5f;">Brazil</div>
<div class="t " style="left:1459px;transform:translateX(-100%);top:731.8px;font-size:15.5px;line-height:20px;color:#5f5f5f;letter-spacing:.1px;">Tax:</div>
<div class="t " style="left:1468.5px;top:731.8px;font-size:15.5px;line-height:20px;color:#ee9c30;letter-spacing:-.5px;">$0</div>
<svg style="left:1492.5px;top:735.5px" width="13" height="13" viewBox="0 0 13 13" fill="none" stroke="#444" stroke-width="1.200"><circle cx="6.500" cy="6.500" r="5.500"/><path d="M4.800 5.300c0-1.100.8-1.800 1.700-1.800 1 0 1.700.7 1.700 1.600 0 1.200-1.700 1.400-1.700 2.700"/><circle cx="6.500" cy="9.600" r=".5" fill="#444"/></svg>
<div class="t " style="left:1459px;transform:translateX(-100%);top:750.8px;font-size:15.5px;line-height:20px;color:#5f5f5f;letter-spacing:.28px;">Shipping:</div>
<div class="t " style="left:1468.5px;top:750.8px;font-size:15.5px;line-height:20px;color:#ee9c30;letter-spacing:-.5px;">$0</div>
<svg style="left:1492.5px;top:754.5px" width="13" height="13" viewBox="0 0 13 13" fill="none" stroke="#444" stroke-width="1.200"><circle cx="6.500" cy="6.500" r="5.500"/><path d="M4.800 5.300c0-1.100.8-1.800 1.700-1.800 1 0 1.700.7 1.700 1.600 0 1.200-1.700 1.400-1.700 2.700"/><circle cx="6.500" cy="9.600" r=".5" fill="#444"/></svg>
<div class="t " style="left:1455px;transform:translateX(-100%);top:769.5px;font-size:15.5px;line-height:20px;color:#5f5f5f;letter-spacing:-.1px;">Total:</div>
<div class="t " style="left:1464.5px;top:769.5px;font-size:15.5px;line-height:20px;color:#ee9c30;letter-spacing:.08px;">$15.45</div>
<div class="t " style="left:1443.3px;transform:translateX(-50%);top:804.6px;font-size:15.4px;line-height:20px;color:#1a1aa6;"><a>Aliexpress Standard shipping-PH-</a></div>
<div class="t " style="left:1443.3px;transform:translateX(-50%);top:827.6px;font-size:15.4px;line-height:20px;color:#1a1aa6;"><a>Free Shipping</a></div>
<div class="t " style="left:1665px;transform:translateX(-50%);top:782px;font-size:15.3px;line-height:20px;color:#5f5f5f;">2025-07-17 13:32:04</div>
<div class="t " style="left:1798px;transform:translateX(-50%);top:782px;font-size:15px;line-height:20px;color:#5f5f5f;">— —</div>
<div class="t " style="left:1931px;transform:translateX(-50%);top:773.5px;font-size:15.3px;line-height:20px;color:#5f5f5f;letter-spacing:.1px;">Awaiting</div>
<div class="t " style="left:1931px;transform:translateX(-50%);top:790.5px;font-size:15.3px;line-height:20px;color:#5f5f5f;letter-spacing:.1px;">Payment</div>
<div class="a" style="left:2055px;top:752px;width:120px;height:36px;background:#ff8c0a;border-radius:10px"></div>
<div class="t " style="left:2115px;transform:translateX(-50%);top:760.5px;font-size:14.6px;line-height:19px;color:#fff;font-family:'Liberation Serif',serif;font-weight:bold;">Pay</div>
<div class="a" style="left:2053px;top:797px;width:124px;height:36px;background:#ebebeb;border-radius:10px"></div>
<div class="t " style="left:2115px;transform:translateX(-50%);top:805.5px;font-size:14.6px;line-height:19px;color:#8c8c8c;font-family:'Liberation Serif',serif;font-weight:bold;">Cancel</div>
<div class="a" style="left:358px;top:880px;width:1840px;height:1px;background:#dcdcdc"></div>
<div class="a" style="left:387px;top:935px;width:17px;height:17px;background:#fff;border:1px solid #b0b0b0;border-radius:3px"></div>
<div class="t " style="left:387.5px;top:959px;font-size:15px;line-height:20px;color:#5f5f5f;">708675</div>
<svg style="left:441px;top:928px" width="87" height="32" viewBox="0 0 87 32"><rect x="0" y="0" width="7.3" height="8.3" fill="#f3f4fa"/><rect x="7" y="0" width="8.3" height="8.3" fill="#b9c6ec"/><rect x="15" y="0" width="16.3" height="8.3" fill="#d3d6f6"/><rect x="31" y="0" width="16.3" height="8.3" fill="#c9d6f5"/><rect x="47" y="0" width="16.3" height="8.3" fill="#c3d0f2"/><rect x="63" y="0" width="8.3" height="8.3" fill="#d3dbf7"/><rect x="71" y="0" width="8.3" height="8.3" fill="#b9c9ee"/><rect x="79" y="0" width="8.3" height="8.3" fill="#d0d5f5"/><rect x="0" y="8" width="7.3" height="8.3" fill="#e6e8f5"/><rect x="7" y="8" width="8.3" height="8.3" fill="#d0d8f5"/><rect x="15" y="8" width="8.3" height="8.3" fill="#c9d3f3"/><rect x="23" y="8" width="24.3" height="8.3" fill="#d3e0fa"/><rect x="47" y="8" width="8.3" height="8.3" fill="#d9e5fc"/><rect x="55" y="8" width="24.3" height="8.3" fill="#cfdaf8"/><rect x="79" y="8" width="8.3" height="8.3" fill="#dadcf8"/><rect x="7" y="16" width="8.3" height="8.3" fill="#e3ecf9"/><rect x="15" y="16" width="8.3" height="8.3" fill="#bfcdf0"/><rect x="23" y="16" width="8.3" height="8.3" fill="#d3e0fa"/><rect x="31" y="16" width="16.3" height="8.3" fill="#c5d3f3"/><rect x="47" y="16" width="16.3" height="8.3" fill="#bcc9ee"/><rect x="63" y="16" width="16.3" height="8.3" fill="#ccdaf7"/><rect x="7" y="24" width="8.3" height="8.3" fill="#eaf0f9"/><rect x="15" y="24" width="24.3" height="8.3" fill="#cdd6f6"/><rect x="39" y="24" width="24.3" height="8.3" fill="#c9d6f5"/><rect x="63" y="24" width="16.3" height="8.3" fill="#d0dffa"/></svg>
<svg style="left:480px;top:968px" width="40" height="16" viewBox="0 0 40 16"><rect x="0" y="0" width="8.3" height="8.3" fill="#f1f1f1"/><rect x="8" y="0" width="8.3" height="8.3" fill="#ededed"/><rect x="16" y="0" width="8.3" height="8.3" fill="#f4f4f4"/><rect x="24" y="0" width="8.3" height="8.3" fill="#ececec"/><rect x="32" y="0" width="8.3" height="8.3" fill="#f0f0f0"/><rect x="0" y="8" width="8.3" height="8.3" fill="#e0dede"/><rect x="8" y="8" width="8.3" height="8.3" fill="#b9bbbf"/><rect x="16" y="8" width="8.3" height="8.3" fill="#dadadf"/><rect x="24" y="8" width="8.3" height="8.3" fill="#bdbfc3"/><rect x="32" y="8" width="8.3" height="8.3" fill="#e0e0e0"/></svg>
<svg style="left:545px;top:932px" width="18" height="19" viewBox="0 0 18 19" fill="none" stroke="#4a4a4a" stroke-width="1.800"><rect x="1.700" y="5.200" width="10.800" height="12.200" rx="1.600"/><path d="M7.300 1.700h8.200a1.500 1.500 0 0 1 1.500 1.500V12"/></svg>
<svg style="left:689px;top:927px" width="62" height="54" viewBox="0 0 62 54"><g filter="url(#bl)"><rect x="4" y="1" width="54" height="42" fill="#e9e9ee"/><rect x="4" y="3" width="4" height="32" fill="#3f434c"/><rect x="54" y="3" width="4" height="32" fill="#3f434c"/><rect x="8" y="3" width="46" height="38" fill="#d9dbea"/><rect x="11" y="8" width="4.500" height="30" fill="#eaa3b0"/><rect x="17" y="8" width="4.500" height="31" fill="#8fdcc8"/><rect x="23" y="12" width="16" height="28" fill="#bfb2ea"/><rect x="40.500" y="8" width="4.500" height="31" fill="#8fdcc8"/><rect x="46.500" y="8" width="4.500" height="30" fill="#eaa3b0"/></g><rect x="0" y="45.500" width="62" height="7.500" rx="2.500" fill="#123f9c"/><text x="31" y="51" text-anchor="middle" font-family="Liberation Sans, sans-serif" font-size="4" fill="#fff">Packaging Fees</text></svg>
<div class="t " style="left:758px;top:917px;font-size:15.57px;line-height:20px;color:#111;font-family:'Liberation Serif',serif;">Packaging Fees-0.8</div>
<div class="t " style="left:758px;top:938px;font-size:15.57px;line-height:20px;color:#666;font-family:'Liberation Serif',serif;">SKU: Color:code;Size:1pcs</div>
<div class="t " style="left:758px;top:959.5px;font-size:17.85px;line-height:23px;color:#111;font-family:'Liberation Serif',serif;">180*$0.8</div>
<div class="t " style="left:1098.5px;transform:translateX(-50%);top:938.5px;font-size:15.6px;line-height:20px;color:#e89c38;font-family:'Liberation Serif',serif;font-weight:bold;">$ 144.00</div>
<div class="t " style="left:1248px;transform:translateX(-50%);top:946px;font-size:15px;line-height:20px;color:#5f5f5f;">Brazil</div>
<div class="t " style="left:1459px;transform:translateX(-100%);top:907.8px;font-size:15.5px;line-height:20px;color:#5f5f5f;letter-spacing:.1px;">Tax:</div>
<div class="t " style="left:1468.5px;top:907.8px;font-size:15.5px;line-height:20px;color:#ee9c30;letter-spacing:-.5px;">$0</div>
<svg style="left:1492.5px;top:911.5px" width="13" height="13" viewBox="0 0 13 13" fill="none" stroke="#444" stroke-width="1.200"><circle cx="6.500" cy="6.500" r="5.500"/><path d="M4.800 5.300c0-1.100.8-1.800 1.700-1.800 1 0 1.700.7 1.700 1.600 0 1.200-1.700 1.400-1.700 2.700"/><circle cx="6.500" cy="9.600" r=".5" fill="#444"/></svg>
<div class="t " style="left:1459px;transform:translateX(-100%);top:926.1px;font-size:15.5px;line-height:20px;color:#5f5f5f;letter-spacing:.28px;">Shipping:</div>
<div class="t " style="left:1468.5px;top:926.1px;font-size:15.5px;line-height:20px;color:#ee9c30;letter-spacing:-.5px;">$0</div>
<svg style="left:1492.5px;top:929.8px" width="13" height="13" viewBox="0 0 13 13" fill="none" stroke="#444" stroke-width="1.200"><circle cx="6.500" cy="6.500" r="5.500"/><path d="M4.800 5.300c0-1.100.8-1.800 1.700-1.800 1 0 1.700.7 1.700 1.600 0 1.200-1.700 1.400-1.700 2.700"/><circle cx="6.500" cy="9.600" r=".5" fill="#444"/></svg>
<div class="t " style="left:1451px;transform:translateX(-100%);top:945.5px;font-size:15.5px;line-height:20px;color:#5f5f5f;letter-spacing:-.1px;">Total:</div>
<div class="t " style="left:1460.5px;top:945.5px;font-size:15.5px;line-height:20px;color:#ee9c30;letter-spacing:.08px;">$144.00</div>
<div class="t " style="left:1443.3px;transform:translateX(-50%);top:980.7px;font-size:15.4px;line-height:20px;color:#1a1aa6;"><a>AQ-Code Shipping</a></div>
<div class="t " style="left:1665px;transform:translateX(-50%);top:946px;font-size:15.3px;line-height:20px;color:#5f5f5f;">2025-07-02 12:23:17</div>
<div class="t " style="left:1798px;transform:translateX(-50%);top:946px;font-size:15px;line-height:20px;color:#5f5f5f;">— —</div>
<div class="t " style="left:1931px;transform:translateX(-50%);top:937.5px;font-size:15.3px;line-height:20px;color:#5f5f5f;letter-spacing:.1px;">Awaiting</div>
<div class="t " style="left:1931px;transform:translateX(-50%);top:953.5px;font-size:15.3px;line-height:20px;color:#5f5f5f;letter-spacing:.1px;">Payment</div>
<div class="a" style="left:2055px;top:916px;width:120px;height:36px;background:#ff8c0a;border-radius:10px"></div>
<div class="t " style="left:2115px;transform:translateX(-50%);top:924.5px;font-size:14.6px;line-height:19px;color:#fff;font-family:'Liberation Serif',serif;font-weight:bold;">Pay</div>
<div class="a" style="left:2053px;top:961px;width:124px;height:36px;background:#ebebeb;border-radius:10px"></div>
<div class="t " style="left:2115px;transform:translateX(-50%);top:969.5px;font-size:14.6px;line-height:19px;color:#8c8c8c;font-family:'Liberation Serif',serif;font-weight:bold;">Cancel</div>
<div class="a" style="left:358px;top:1032px;width:1840px;height:1px;background:#dcdcdc"></div>
<div class="a" style="left:387px;top:1099px;width:17px;height:17px;background:#fff;border:1px solid #b0b0b0;border-radius:3px"></div>
<div class="t " style="left:387.5px;top:1123px;font-size:15px;line-height:20px;color:#5f5f5f;">684173</div>
<svg style="left:441px;top:1092px" width="87" height="32" viewBox="0 0 87 32"><rect x="0" y="0" width="7.3" height="8.3" fill="#f3f4fa"/><rect x="7" y="0" width="8.3" height="8.3" fill="#b9c6ec"/><rect x="15" y="0" width="16.3" height="8.3" fill="#d3d6f6"/><rect x="31" y="0" width="16.3" height="8.3" fill="#c9d6f5"/><rect x="47" y="0" width="16.3" height="8.3" fill="#c3d0f2"/><rect x="63" y="0" width="8.3" height="8.3" fill="#d3dbf7"/><rect x="71" y="0" width="8.3" height="8.3" fill="#b9c9ee"/><rect x="79" y="0" width="8.3" height="8.3" fill="#d0d5f5"/><rect x="0" y="8" width="7.3" height="8.3" fill="#e6e8f5"/><rect x="7" y="8" width="8.3" height="8.3" fill="#d0d8f5"/><rect x="15" y="8" width="8.3" height="8.3" fill="#c9d3f3"/><rect x="23" y="8" width="24.3" height="8.3" fill="#d3e0fa"/><rect x="47" y="8" width="8.3" height="8.3" fill="#d9e5fc"/><rect x="55" y="8" width="24.3" height="8.3" fill="#cfdaf8"/><rect x="79" y="8" width="8.3" height="8.3" fill="#dadcf8"/><rect x="7" y="16" width="8.3" height="8.3" fill="#e3ecf9"/><rect x="15" y="16" width="8.3" height="8.3" fill="#bfcdf0"/><rect x="23" y="16" width="8.3" height="8.3" fill="#d3e0fa"/><rect x="31" y="16" width="16.3" height="8.3" fill="#c5d3f3"/><rect x="47" y="16" width="16.3" height="8.3" fill="#bcc9ee"/><rect x="63" y="16" width="16.3" height="8.3" fill="#ccdaf7"/><rect x="7" y="24" width="8.3" height="8.3" fill="#eaf0f9"/><rect x="15" y="24" width="24.3" height="8.3" fill="#cdd6f6"/><rect x="39" y="24" width="24.3" height="8.3" fill="#c9d6f5"/><rect x="63" y="24" width="16.3" height="8.3" fill="#d0dffa"/></svg>
<svg style="left:480px;top:1132px" width="40" height="16" viewBox="0 0 40 16"><rect x="0" y="0" width="8.3" height="8.3" fill="#f1f1f1"/><rect x="8" y="0" width="8.3" height="8.3" fill="#ededed"/><rect x="16" y="0" width="8.3" height="8.3" fill="#f4f4f4"/><rect x="24" y="0" width="8.3" height="8.3" fill="#ececec"/><rect x="32" y="0" width="8.3" height="8.3" fill="#f0f0f0"/><rect x="0" y="8" width="8.3" height="8.3" fill="#e0dede"/><rect x="8" y="8" width="8.3" height="8.3" fill="#b9bbbf"/><rect x="16" y="8" width="8.3" height="8.3" fill="#dadadf"/><rect x="24" y="8" width="8.3" height="8.3" fill="#bdbfc3"/><rect x="32" y="8" width="8.3" height="8.3" fill="#e0e0e0"/></svg>
<svg style="left:545px;top:1096px" width="18" height="19" viewBox="0 0 18 19" fill="none" stroke="#4a4a4a" stroke-width="1.800"><rect x="1.700" y="5.200" width="10.800" height="12.200" rx="1.600"/><path d="M7.300 1.700h8.200a1.500 1.500 0 0 1 1.500 1.500V12"/></svg>
<svg style="left:691px;top:1084px" width="56" height="60" viewBox="0 0 56 60"><g filter="url(#bl)"><ellipse cx="39.500" cy="52.600" rx="2.600" ry="3" fill="#e6e6e6"/><ellipse cx="47.500" cy="54.500" rx="2.600" ry="3" fill="#e2e2e2"/><path d="M35.200 2 H51 C 52.500 8, 52.800 20, 52 32 L 51.500 49 C 50 50.500, 47 50.500, 45.500 49 L 44.500 25 L 42.500 47 C 40 48, 36 47.500, 34.500 46 L 33.500 14 Z" fill="#0c0c0c"/><path d="M14 6.500 C 18 5, 25 5, 29 6.500 L 31.500 12 C 36 13.500, 39 17, 39.500 22 L 40 45 C 39 47.500, 35.500 48, 33.500 46.500 L 32.500 49.500 C 26 50.500, 17 50.500, 10.800 49.500 L 10 46.500 C 7.500 48.500, 3.500 48, 2.500 45.500 L 2 27 C 2.500 20, 5.500 15, 11 12.500 Z" fill="#171717"/><path d="M12 24 L 30 24 L 31.500 49 L 11.500 49 Z" fill="#242424"/><path d="M10.500 33 l1.500 0 l.5 11 l-2 0z" fill="#6b6f45"/><path d="M30.500 33.500 l1.500 0 l0 8 l-1.500 0z" fill="#55583a"/></g></svg>
<div class="t " style="left:758px;top:1080px;font-size:15.57px;line-height:20px;color:#111;font-family:'Liberation Serif',serif;">Winter and autumn sports sweatshirt s…</div>
<div class="t " style="left:758px;top:1102px;font-size:15.57px;line-height:20px;color:#666;font-family:'Liberation Serif',serif;">SKU: color:black;size:L</div>
<div class="t " style="left:758px;top:1123.5px;font-size:17.85px;line-height:23px;color:#111;font-family:'Liberation Serif',serif;">1*$23.66</div>
<div class="t " style="left:1098.5px;transform:translateX(-50%);top:1102px;font-size:15.6px;line-height:20px;color:#e89c38;font-family:'Liberation Serif',serif;font-weight:bold;">$ 23.66</div>
<div class="t " style="left:1248px;transform:translateX(-50%);top:1110px;font-size:15px;line-height:20px;color:#5f5f5f;">Brazil</div>
<div class="t " style="left:1459px;transform:translateX(-100%);top:1059.5px;font-size:15.5px;line-height:20px;color:#5f5f5f;letter-spacing:.1px;">Tax:</div>
<div class="t " style="left:1468.5px;top:1059.5px;font-size:15.5px;line-height:20px;color:#ee9c30;letter-spacing:-.5px;">$0</div>
<svg style="left:1492.5px;top:1063.2px" width="13" height="13" viewBox="0 0 13 13" fill="none" stroke="#444" stroke-width="1.200"><circle cx="6.500" cy="6.500" r="5.500"/><path d="M4.800 5.300c0-1.100.8-1.800 1.700-1.800 1 0 1.700.7 1.700 1.600 0 1.200-1.700 1.400-1.700 2.700"/><circle cx="6.500" cy="9.600" r=".5" fill="#444"/></svg>
<div class="t " style="left:1459px;transform:translateX(-100%);top:1078.5px;font-size:15.5px;line-height:20px;color:#5f5f5f;letter-spacing:.28px;">Shipping:</div>
<div class="t " style="left:1468.5px;top:1078.5px;font-size:15.5px;line-height:20px;color:#ee9c30;letter-spacing:-.5px;">$0</div>
<svg style="left:1492.5px;top:1082.2px" width="13" height="13" viewBox="0 0 13 13" fill="none" stroke="#444" stroke-width="1.200"><circle cx="6.500" cy="6.500" r="5.500"/><path d="M4.800 5.300c0-1.100.8-1.800 1.700-1.800 1 0 1.700.7 1.700 1.600 0 1.200-1.700 1.400-1.700 2.700"/><circle cx="6.500" cy="9.600" r=".5" fill="#444"/></svg>
<div class="t " style="left:1455px;transform:translateX(-100%);top:1097.2px;font-size:15.5px;line-height:20px;color:#5f5f5f;letter-spacing:-.1px;">Total:</div>
<div class="t " style="left:1464.5px;top:1097.2px;font-size:15.5px;line-height:20px;color:#ee9c30;letter-spacing:.08px;">$23.66</div>
<div class="t " style="left:1443.3px;transform:translateX(-50%);top:1132.8px;font-size:15.4px;line-height:20px;color:#1a1aa6;"><a>Aliexpress Standard shipping-PH-</a></div>
<div class="t " style="left:1443.3px;transform:translateX(-50%);top:1155.8px;font-size:15.4px;line-height:20px;color:#1a1aa6;"><a>Free Shipping</a></div>
<div class="t " style="left:1665px;transform:translateX(-50%);top:1110px;font-size:15.3px;line-height:20px;color:#5f5f5f;">2025-06-13 09:50:41</div>
<div class="t " style="left:1798px;transform:translateX(-50%);top:1110px;font-size:15px;line-height:20px;color:#5f5f5f;">— —</div>
<div class="t " style="left:1931px;transform:translateX(-50%);top:1101.5px;font-size:15.3px;line-height:20px;color:#5f5f5f;letter-spacing:.1px;">Awaiting</div>
<div class="t " style="left:1931px;transform:translateX(-50%);top:1117.5px;font-size:15.3px;line-height:20px;color:#5f5f5f;letter-spacing:.1px;">Payment</div>
<div class="a" style="left:2055px;top:1079px;width:120px;height:36px;background:#ff8c0a;border-radius:10px"></div>
<div class="t " style="left:2115px;transform:translateX(-50%);top:1087.5px;font-size:14.6px;line-height:19px;color:#fff;font-family:'Liberation Serif',serif;font-weight:bold;">Pay</div>
<div class="a" style="left:2053px;top:1125.5px;width:124px;height:36px;background:#ebebeb;border-radius:10px"></div>
<div class="t " style="left:2115px;transform:translateX(-50%);top:1134px;font-size:14.6px;line-height:19px;color:#8c8c8c;font-family:'Liberation Serif',serif;font-weight:bold;">Cancel</div>
<svg style="left:0;top:0" width="2240" height="1148" viewBox="0 0 2240 1148">
<rect x="322" y="358" width="164" height="61" fill="none" stroke="#dc3942" stroke-width="5.800"/>
<rect x="34.800" y="542.900" width="259.300" height="54" fill="none" stroke="#dc3942" stroke-width="5.500"/>
<path d="M239.500 474.500 L299 424" stroke="#dc3942" stroke-width="4.600" fill="none"/>
<path d="M309.300 415.600 L291.500 418.200 L303.400 432.200 Z" fill="#dc3942"/>
<path d="M404.300 687.400 L314 610" stroke="#dc3942" stroke-width="4.900" fill="none"/>
<path d="M304 602 L322 605.300 L309.500 619 Z" fill="#dc3942"/>
</svg>
<div class="a" style="left:2206px;top:742px;width:40px;height:156px;background:#6337d6;border-radius:9px 0 0 0"></div>
<div class="a" style="left:2194px;top:870.5px;width:33px;height:33.5px;background:#6337d6;border-radius:50%"></div>
<svg style="left:2200px;top:877px" width="24" height="20" viewBox="0 0 24 20" fill="none" stroke="#fff"><rect x="3.400" y="3.800" width="16.500" height="12.300" rx="5.200" stroke-width="2.300"/><path d="M5.500 15.300l-1.200 2.600 3.400-1.300" stroke-width="1.600" stroke-linejoin="round" fill="#fff"/><circle cx="8.600" cy="10" r="1" fill="#fff" stroke="none"/><circle cx="11.700" cy="10" r="1" fill="#fff" stroke="none"/><circle cx="14.800" cy="10" r="1" fill="#fff" stroke="none"/></svg>
<div class="t" style="left:2224px;top:815px;transform:translate(-50%,-50%) rotate(90deg);font-size:18.600px;font-weight:bold;color:#fff;line-height:22px;-webkit-text-stroke:.9px #fff">Contact us</div>
</div>
</body>
</html>
